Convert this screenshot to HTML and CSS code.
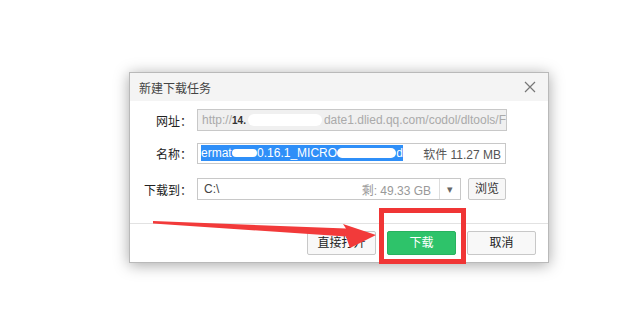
FILE: index.html
```html
<!DOCTYPE html>
<html>
<head>
<meta charset="utf-8">
<link rel="stylesheet" href="styles.css">
</head>
<body>
<div class="dialog">
  <div class="titlebar">
    <span class="title">新建下载任务</span>
    <svg class="close" width="12" height="12" viewBox="0 0 12 12"><path d="M1 1L11 11M11 1L1 11" stroke="#777" stroke-width="1.2" fill="none"/></svg>
  </div>
  <div class="content">
    <div class="row r1">
      <div class="label">网址：</div>
      <div class="field url"><span class="t">http://</span><span class="dk">14.</span><span class="blob b1"></span><span class="t">date1.dlied.qq.com/codol/dltools/F</span></div>
    </div>
    <div class="row r2">
      <div class="label">名称：</div>
      <div class="field name"><span class="sel">ermat<span class="blob b2"></span>0.16.1_MICRO<span class="blob b3"></span>d</span><span class="size">软件 11.27 MB</span></div>
    </div>
    <div class="row r3">
      <div class="label">下载到：</div>
      <div class="field path"><span class="p">C:\</span><span class="free">剩: 49.33 GB</span><span class="drop">▾</span></div>
      <div class="browse">浏览</div>
    </div>
  </div>
  <div class="footer">
    <div class="btn">直接打开</div>
    <div class="btn green">下载</div>
    <div class="btn">取消</div>
  </div>
</div>
<svg class="overlay" width="620" height="309" viewBox="0 0 620 309">
  <polygon points="153,221 346,228.5 343,224 376,235 350,248 346,236.5 153,223.5" fill="#f23a3a"/>
  <rect x="381.5" y="210.5" width="82" height="51" fill="none" stroke="#f03535" stroke-width="5"/>
</svg>
</body>
</html>
```
FILE: styles.css
```css
html, body { margin: 0; padding: 0; background: #fff; }
body {
  width: 620px; height: 309px; overflow: hidden; position: relative;
  font-family: "Liberation Sans", "Noto Sans CJK SC", sans-serif;
  font-size: 12px; color: #333;
}
.dialog {
  margin: 72px 0 0 129px;
  width: 418px; height: 189px;
  border: 1px solid #b9b9b9;
  background: #fff;
  box-shadow: 0 2px 14px rgba(0,0,0,0.35);
  display: flex; flex-direction: column;
}
.titlebar {
  height: 28px; background: #f4f4f4;
  display: flex; align-items: center; justify-content: space-between;
  padding: 0 12px 0 9px;
}
.title { font-size: 12px; color: #444; }
.close { display: block; }
.content { padding-top: 8px; height: 114px; border-bottom: 1px solid #e2e2e2; }
.row { display: flex; align-items: center; height: 22px; }
.r2 { margin-top: 11px; }
.r3 { margin-top: 14px; }
.label { width: 62px; text-align: right; padding-right: 5px; font-size: 12px; color: #222; }
.field {
  height: 20px; border: 1px solid #c8c8c8; box-sizing: content-box;
  display: flex; align-items: center; overflow: hidden; white-space: nowrap;
  font-size: 12px;
}
.url { width: 307px; background: #f0f0f0; color: #aaa; padding-left: 4px; width: 304px; }
.url .dk { color: #333; font-size: 10px; font-weight: bold; }
.blob { display: inline-block; background: #fff; border-radius: 6px; }
.b1 { width: 110px; height: 12px; margin: 0 2px; }
.name { width: 307px; height: 19px; position: relative; }
.sel {
  background: #2f8ff8; color: #fff; height: 16px; line-height: 16px;
  margin-left: 3px; width: 202px; overflow: hidden; display: flex; align-items: center;
}
.b2 { width: 30px; height: 8px; background: #fff; }
.b3 { width: 70px; height: 10px; background: #fff; }
.size { margin-left: auto; padding-right: 4px; color: #555; }
.path { width: 262px; position: relative; }
.p { padding-left: 6px; color: #444; }
.free { margin-left: auto; color: #999; padding-right: 8px; }
.drop { width: 20px; height: 20px; border-left: 1px solid #ddd; text-align: center; line-height: 20px; color: #666; font-size: 11px; }
.browse {
  margin-left: 7px; width: 36px; height: 20px; border: 1px solid #c8c8c8;
  background: #f7f7f7; text-align: center; line-height: 20px; color: #333; border-radius: 2px;
}
.footer {
  flex: 1; display: flex; justify-content: flex-end; align-items: flex-start;
  padding: 7px 12px 0 0; gap: 11px;
}
.btn {
  width: 67px; height: 22px; border: 1px solid #c8c8c8; border-radius: 2px;
  background: #f8f8f8; text-align: center; line-height: 22px; color: #222; font-size: 12px;
}
.btn.green { background: #2ec36a; border-color: #28b25f; color: #fff; }
.overlay { position: absolute; left: 0; top: 0; pointer-events: none; }
```
